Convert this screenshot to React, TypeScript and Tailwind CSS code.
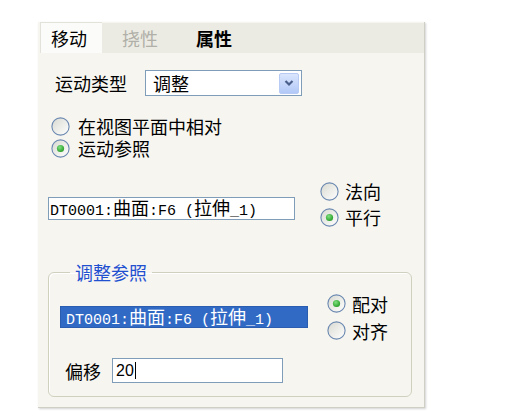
import React from "react";

function Radio({ checked }: { checked?: boolean }) {
  return (
    <svg width="19" height="19" viewBox="0 0 19 19" className="shrink-0">
      <defs>
        <linearGradient id="radioFill" x1="0" y1="0" x2="1" y2="1">
          <stop offset="0" stopColor="#d9d9d2" />
          <stop offset="1" stopColor="#ffffff" />
        </linearGradient>
        <radialGradient id="radioDot" cx="0.4" cy="0.35" r="0.7">
          <stop offset="0" stopColor="#7fe07f" />
          <stop offset="1" stopColor="#239a23" />
        </radialGradient>
      </defs>
      <circle cx="9.5" cy="9.5" r="8.6" fill="url(#radioFill)" stroke="#6a88b0" strokeWidth="1.1" />
      {checked && <circle cx="9.5" cy="9.5" r="3.6" fill="url(#radioDot)" />}
    </svg>
  );
}

function RefText() {
  // SimSun-like: half-width latin, full-width CJK
  return (
    <span className="font-['Liberation_Mono',monospace] text-[15px] whitespace-nowrap">
      DT0001:<span className="font-['Noto_Sans_CJK_SC',sans-serif] text-[18px]">曲面</span>:F6 (
      <span className="font-['Noto_Sans_CJK_SC',sans-serif] text-[18px]">拉伸</span>_1)
    </span>
  );
}

export default function App() {
  return (
    <div className="w-[506px] h-[414px] bg-white pt-[22px] pl-[38px] font-['Noto_Sans_CJK_SC',sans-serif] text-[18px] leading-none text-black">
      <div className="w-[387px] h-[386px] bg-[#f6f5f0] border-r border-b border-[#cfcfc6] shadow-[1px_1px_2px_rgba(0,0,0,0.18)] flex flex-col">
        {/* tabs */}
        <div className="flex h-[31px]">
          <div className="ml-[2px] w-[62px] bg-[#fbfbf9] border-t border-l border-[#e2e2da] flex items-center pl-[10px]">
            移动
          </div>
          <div className="flex-1 mt-[1px] bg-[#ecebe3] flex items-center">
            <span className="ml-[20px] text-[#b0b0a8]">挠性</span>
            <span className="ml-[38px] font-bold">属性</span>
          </div>
        </div>

        {/* motion type */}
        <div className="mt-[17px] flex items-center h-[26px] pl-[17px]">
          <span>运动类型</span>
          <div className="ml-[18px] w-[157px] h-[26px] border border-[#7f9db9] bg-white flex items-center pl-[7px]">
            <span>调整</span>
            <div className="ml-auto mr-[2px] w-[20px] h-[21px] rounded-[2px] border border-[#b7cbf5] bg-gradient-to-b from-[#dbe6fd] to-[#b2c8f7] flex items-center justify-center">
              <svg width="10" height="8" viewBox="0 0 10 8">
                <polyline points="1.5,2 5,5.5 8.5,2" fill="none" stroke="#4a5f8c" strokeWidth="2.2" />
              </svg>
            </div>
          </div>
        </div>

        {/* reference mode */}
        <div className="mt-[19px] pl-[13px] flex flex-col">
          <div className="h-[22px] flex items-center gap-[8px]">
            <Radio />
            <span>在视图平面中相对</span>
          </div>
          <div className="h-[22px] flex items-center gap-[8px]">
            <Radio checked />
            <span>运动参照</span>
          </div>
        </div>

        {/* motion reference */}
        <div className="mt-[19px] pl-[10px] flex items-start">
          <div className="mt-[19px] w-[247px] h-[23px] border border-[#7f9db9] bg-white flex items-center pl-[1px]">
            <RefText />
          </div>
          <div className="ml-[25px] flex flex-col">
            <div className="h-[26px] flex items-center gap-[6px]">
              <Radio />
              <span>法向</span>
            </div>
            <div className="h-[26px] flex items-center gap-[6px]">
              <Radio checked />
              <span>平行</span>
            </div>
          </div>
        </div>

        {/* adjust reference group */}
        <fieldset className="mt-[32px] ml-[10px] w-[364px] border border-[#d0d0bf] rounded-[6px] px-0 pb-[13px] shadow-[inset_1px_1px_0_#ffffff]">
          <legend className="ml-[21px] px-[5px] h-[20px] leading-[20px] text-[#1f50d0]">调整参照</legend>
          <div className="mt-[8px] pl-[11px] flex items-start">
            <div className="mt-[16px] w-[248px] h-[22px] bg-[#316ac5] border border-[#2a5db0] text-white flex items-center pl-[5px]">
              <RefText />
            </div>
            <div className="ml-[19px] flex flex-col">
              <div className="h-[27px] flex items-center gap-[6px]">
                <Radio checked />
                <span>配对</span>
              </div>
              <div className="h-[27px] flex items-center gap-[6px]">
                <Radio />
                <span>对齐</span>
              </div>
            </div>
          </div>
          <div className="mt-[14px] pl-[16px] flex items-center h-[25px]">
            <span>偏移</span>
            <div className="ml-[11px] w-[171px] h-[25px] border border-[#7f9db9] bg-white flex items-center pl-[3px]">
              <span className="font-['Liberation_Sans',sans-serif] text-[16px]">20</span>
              <span className="w-[1px] h-[17px] bg-black ml-[1px]" />
            </div>
          </div>
        </fieldset>
      </div>
    </div>
  );
}
